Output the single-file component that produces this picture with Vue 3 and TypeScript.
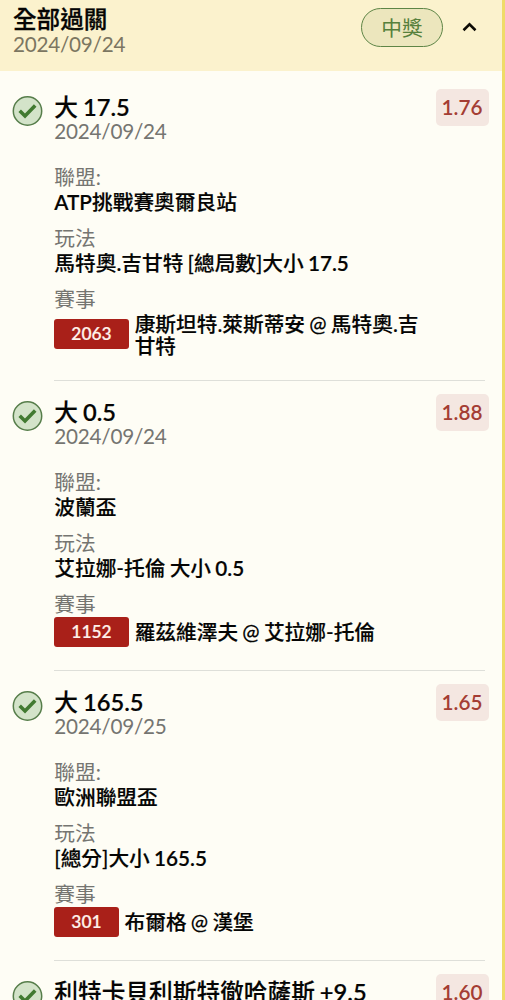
<script setup lang="ts">
interface Leg {
  pick: string
  date: string
  odds: string
  league: string
  play: string
  code: string
  match: string
}

interface Run {
  text: string
  latin: boolean
}

const legs: Leg[] = [
  { pick: '大 17.5', date: '2024/09/24', odds: '1.76', league: 'ATP挑戰賽奧爾良站', play: '馬特奧.吉甘特 [總局數]大小 17.5', code: '2063', match: '康斯坦特.萊斯蒂安 @ 馬特奧.吉甘特' },
  { pick: '大 0.5', date: '2024/09/24', odds: '1.88', league: '波蘭盃', play: '艾拉娜-托倫 大小 0.5', code: '1152', match: '羅茲維澤夫 @ 艾拉娜-托倫' },
  { pick: '大 165.5', date: '2024/09/25', odds: '1.65', league: '歐洲聯盟盃', play: '[總分]大小 165.5', code: '301', match: '布爾格 @ 漢堡' },
  { pick: '利特卡貝利斯特徹哈薩斯 +9.5', date: '', odds: '1.60', league: '', play: '', code: '', match: '' },
]

// Latin letters and figures are set one weight heavier than the Chinese text.
function runs(text: string): Run[] {
  return (text.match(/[A-Z0-9+.]+|[^A-Z0-9+.]+/g) ?? []).map((t) => ({ text: t, latin: /[A-Z0-9+.]/.test(t) }))
}
</script>

<template>
  <main class="slip">
    <header class="head">
      <div class="head-text">
        <h1>全部過關</h1>
        <div class="date">2024/09/24</div>
      </div>
      <span class="won">中獎</span>
      <svg class="chevron" width="16" height="12" viewBox="0 0 16 12">
        <path d="M1.500 9.200 7.500 3.400l6 5.800" fill="none" stroke="#0c0b05" stroke-width="2.600" />
      </svg>
    </header>
    <section v-for="(leg, i) in legs" :key="i" class="leg">
      <svg class="check" width="31" height="30" viewBox="0 0 31 30">
        <circle cx="15.500" cy="15" r="14.200" fill="#d3e3c9" stroke="#567d4a" stroke-width="1.500" />
        <path d="M7.700 14.800 13 20 23.200 9.500" fill="none" stroke="#417a31" stroke-width="3.600" />
      </svg>
      <div class="body">
        <h2><span v-for="(r, k) in runs(leg.pick)" :key="k" :class="{ latin: r.latin }">{{ r.text }}</span></h2>
        <div class="date">{{ leg.date }}</div>
        <template v-if="leg.league">
          <dl>
            <dt>聯盟:</dt>
            <dd><span v-for="(r, k) in runs(leg.league)" :key="k" :class="{ latin: r.latin }">{{ r.text }}</span></dd>
            <dt>玩法</dt>
            <dd><span v-for="(r, k) in runs(leg.play)" :key="k" :class="{ latin: r.latin }">{{ r.text }}</span></dd>
            <dt>賽事</dt>
          </dl>
          <div class="match">
            <span class="code">{{ leg.code }}</span>
            <span class="teams">{{ leg.match }}</span>
          </div>
        </template>
      </div>
      <span class="odds">{{ leg.odds }}</span>
    </section>
  </main>
</template>

<style>
body {
  margin: 0;
  background: #fefdf5;
}
</style>

<style scoped>
.slip {
  box-sizing: border-box;
  height: 1000px;
  overflow: hidden;
  border-right: 3px solid #efdb68;
  background: #fefdf5;
  color: #050504;
  font: 400 20.7px/25px Lato, "Noto Sans CJK TC", sans-serif;
}
.head {
  display: flex;
  align-items: flex-start;
  box-sizing: border-box;
  height: 70.5px;
  margin-bottom: 5px;
  padding: 7px 24px 0 13px;
  background: #fbf2cd;
}
.head-text {
  flex: 1;
}
h1,
h2 {
  margin: 0;
  font-size: 23.600px;
  line-height: 24px;
  font-weight: 500;
  white-space: nowrap;
}
h1 {
  line-height: 25px;
  -webkit-text-stroke: 0.3px currentColor;
}
h2,
dd,
.teams {
  word-spacing: -1px;
  -webkit-text-stroke: 0.16px currentColor;
}
h2 {
  font-size: 23.700px;
}
.latin {
  font-weight: 600;
}
.date {
  height: 25px;
  color: #757571;
  letter-spacing: -0.25px;
}
.head .date {
  color: #7b7661;
}
.won {
  box-sizing: border-box;
  width: 82px;
  height: 39px;
  margin: 1px 19px 0 0;
  border: 1.500px solid #5e8546;
  border-radius: 20px;
  background: #ece6bd;
  color: #56803c;
  line-height: 38px;
  text-align: center;
}
.chevron {
  margin-top: 14px;
}
.leg {
  display: grid;
  grid-template-columns: 31px 1fr auto;
  column-gap: 11.300px;
  align-items: start;
  padding: 0 13.500px 0 12px;
}
.check {
  margin-top: 20px;
}
.body {
  width: 431px;
  margin-right: -70px;
  padding-top: 19px;
  padding-bottom: 23px;
  border-bottom: 1px solid #dedfd9;
}
dl {
  margin: 21px 0 0;
}
dt {
  color: #757571;
}
dd {
  margin: 0 0 11px;
  font-weight: 500;
}
dd span {
  position: relative;
  top: 0.500px;
}
.match {
  display: flex;
  align-items: center;
  gap: 6px;
  min-height: 30px;
}
.code {
  flex: none;
  padding: 0 17px;
  border-radius: 3px;
  background: #a92019;
  color: #fff0e9;
  font-size: 17.400px;
  font-weight: 600;
  line-height: 30px;
  -webkit-text-stroke: 0.15px currentColor;
}
.teams {
  max-width: 298px;
  padding-top: 1px;
  font-weight: 500;
  line-height: 22px;
}
.odds {
  box-sizing: border-box;
  width: 53px;
  height: 37px;
  margin-top: 13px;
  border-radius: 5px;
  background: #f4e7e1;
  color: #a43d33;
  font-weight: 600;
  line-height: 37px;
  text-align: center;
}
</style>
